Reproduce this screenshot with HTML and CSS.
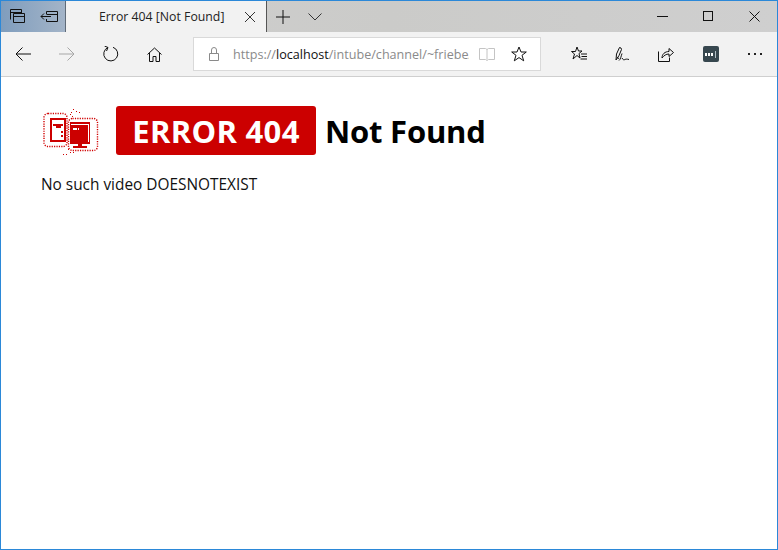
FILE: index.html
```html
<!DOCTYPE html>
<html lang="en">
<head>
    <meta charset="UTF-8">
    <title>Error 404 [Not Found]</title>
    <link rel="stylesheet" href="styles.css">
</head>
<body>
    <div class="window">
        <div class="tabbar">
            <div class="tab-tools">
                <svg width="20" height="21" viewBox="0 0 20 21"><path d="M2.500 13.500V3.500H13.500V7M2.500 6.500H13.500M5.500 7.500h11v9h-11zM5.500 10.500h11" fill="none" stroke="#111"/></svg>
                <svg width="20" height="21" viewBox="0 0 20 21"><path d="M6.500 8V5.500H17.500V15.500H6.500V13M6.500 8.500H17.500M1 10.500h10M4 7.500l-3 3 3 3" fill="none" stroke="#111"/></svg>
            </div>
            <div class="tab">
                <span class="tab-title">Error 404 [Not Found]</span>
                <svg width="12" height="12" viewBox="0 0 12 12"><path d="M1 1l10 10M11 1L1 11" fill="none" stroke="#333"/></svg>
            </div>
            <div class="tab-new">
                <svg width="14" height="14" viewBox="0 0 14 14"><path d="M7 0v14M0 7h14" fill="none" stroke="#111"/></svg>
                <svg width="14" height="8" viewBox="0 0 14 8"><path d="M.5.5L7 7 13.500.5" fill="none" stroke="#333"/></svg>
            </div>
            <div class="win-btns">
                <svg width="11" height="11" viewBox="0 0 11 11"><path d="M0 5.500h11" stroke="#111"/></svg>
                <svg width="11" height="11" viewBox="0 0 11 11"><rect x=".5" y=".5" width="9" height="9" fill="none" stroke="#111"/></svg>
                <svg width="11" height="11" viewBox="0 0 11 11"><path d="M.5.5l10 10M10.500 .5l-10 10" fill="none" stroke="#111"/></svg>
            </div>
        </div>
        <div class="toolbar">
            <div class="nav">
                <svg width="16" height="14" viewBox="0 0 16 14"><path d="M16 7H1M7.500.5L1 7l6.500 6.500" fill="none" stroke="#111"/></svg>
                <svg width="16" height="14" viewBox="0 0 16 14"><path d="M0 7h15M8.500.5L15 7l-6.500 6.500" fill="none" stroke="#a6a6a6"/></svg>
                <svg width="16" height="16" viewBox="0 0 16 16"><path d="M5 1.500A7 7 0 1 0 10 1.300M1.500 0L5 1.500 3.500 5" fill="none" stroke="#111"/></svg>
                <svg width="15" height="15" viewBox="0 0 15 15"><path d="M.5 7.500L7.500 1l7 6.500M2.500 6v8.500h3.500v-5h3v5h3.500V6" fill="none" stroke="#111"/></svg>
            </div>
            <div class="addressbar">
                <svg width="12" height="14" viewBox="0 0 12 14"><path d="M1.500 6.500h9v7h-9zM3.500 6.500V3a2.500 2.500 0 0 1 5 0v3.500" fill="none" stroke="#8a8a8a"/></svg>
                <span class="url">https://<b>localhost</b>/intube/channel/~friebe/</span>
                <svg class="reader" width="16" height="15" viewBox="0 0 16 15"><path d="M.5 1.500h6l1.500 1 1.500-1h6v11h-6l-1.500 1-1.500-1h-6zM8 2.500v10" fill="none" stroke="#c4c4c4"/></svg>
                <svg width="16" height="16" viewBox="0 0 16 16"><path d="M8 1l2 5h5.300l-4.300 3.300 1.700 5.500L8 11.600l-4.700 3.200L5 9.300.7 6H6z" fill="none" stroke="#111"/></svg>
            </div>
            <div class="actions">
                <svg width="16" height="16" viewBox="0 0 16 16"><path d="M6 1l1.500 4h3.500L8 7.500l1 4.500-3-2.500L2 13l1.500-5L.5 5.500H4.500zM10 8h6M10.500 10.500h5.500M9.500 13h6.500" fill="none" stroke="#111"/></svg>
                <svg width="15" height="16" viewBox="0 0 15 16"><path d="M1 14l.500-6 3-6.500 1.500.500.500 1.500-2.500 6zM2 11.500l2 1M7 7.500c-1 3-1.500 6-3 7M7 12c1 2 2 2 3 1.500s2-.500 4 0" fill="none" stroke="#111"/></svg>
                <svg width="16" height="16" viewBox="0 0 16 16"><path d="M.5 5.500v10h11v-4M4 12c0-4 3-6.500 7-6.500V2.500l4.500 4-4.500 4V8c-3 0-5 1.500-7 4z" fill="none" stroke="#111"/></svg>
                <span class="ext"><i></i><i></i><i></i><em></em></span>
                <span class="more"><i></i><i></i><i></i></span>
            </div>
        </div>
        <div class="content">
            <h1 class="title">
                <svg class="logo" width="58" height="46" viewBox="0 0 58 46">
                    <rect x="2" y="4.500" width="23" height="33" rx="4" fill="none" stroke="#d00000" stroke-width="1.400" stroke-dasharray="1.200 1.200"/>
                    <rect x="26.500" y="9.500" width="29" height="32" rx="4" fill="none" stroke="#d00000" stroke-width="1.400" stroke-dasharray="1.200 1.200"/>
                    <path d="M31 0h1v1h-1zM29 3h1v1h-1zM34 2h1v1h-1zM37 3h1v1h-1zM28 5h1v1h-1zM30 7h1v1h-1zM26 40h1v1h-1zM28 43h1v1h-1zM24 45h1v1h-1zM21 45h1v1h-1zM31 43h1v1h-1z" fill="#d00000"/>
                    <path d="M8 9h16v24H8zM10 11v20h12V11z" fill="#c00" fill-rule="evenodd"/>
                    <path d="M11 15h10v2H11zM14 17h5v2h-5zM19 22h2v2h-2zM19 26h2v2h-2z" fill="#c00"/>
                    <path d="M28 13h20v22H28z" fill="#c00"/>
                    <path d="M29 15h17v1H29zM46 15h1v18h-1z" fill="#fff"/>
                    <path d="M31 19h4v2h-4zM36 19h1v2h-1z" fill="#fff"/>
                    <path d="M36 35h4v2h-4zM31 37h14v2H31z" fill="#c00"/>
                </svg>
                <span class="badge">ERROR 404</span>
                <span class="status">Not Found</span>
            </h1>
            <p class="message">No such video DOESNOTEXIST</p>
        </div>
    </div>
</body>
</html>
```

FILE: styles.css
```css
* {
    margin: 0;
    padding: 0;
    box-sizing: border-box;
}
html, body {
    width: 100%;
    height: 100%;
    overflow: hidden;
    background: #fff;
    font-family: "Open Sans", "Noto Sans", sans-serif;
}
svg {
    display: block;
    flex: none;
}

.window {
    display: flex;
    flex-direction: column;
    height: 100%;
    border: 1px solid #2b88d8;
}

.tabbar {
    display: flex;
    height: 31px;
    background: linear-gradient(to right, #cfcfcf, #cbcbc9 50%, #cfcfcf);
}
.tab-tools {
    display: flex;
    align-items: center;
    gap: 12px;
    width: 65px;
    padding-left: 7px;
    background: linear-gradient(to right, #7f9dbd, #a3b4c8);
    border-right: 1px solid #5f6b78;
}
.tab {
    display: flex;
    align-items: center;
    width: 201px;
    padding-left: 33px;
    background: #f2f2f2;
    border-right: 1px solid #555;
}
.tab-title {
    width: 145px;
    font-size: 12.3px;
    color: #222;
    white-space: nowrap;
}
.tab-new {
    display: flex;
    align-items: center;
    gap: 18px;
    padding-left: 9px;
}
.win-btns {
    display: flex;
    align-items: center;
    gap: 35px;
    margin-left: auto;
    padding-right: 17px;
}

.toolbar {
    display: flex;
    align-items: center;
    height: 45px;
    background: #f2f2f2;
    border-bottom: 1px solid #cfcfcf;
}
.nav {
    display: flex;
    align-items: center;
    gap: 28px;
    width: 192px;
    padding-left: 14px;
}
.addressbar {
    display: flex;
    align-items: center;
    width: 348px;
    height: 34px;
    padding-left: 14px;
    background: #fff;
    border: 1px solid #d9d9d9;
}
.url {
    width: 236px;
    margin-left: 13px;
    overflow: hidden;
    font-size: 12.6px;
    color: #8a8a8a;
    white-space: nowrap;
}
.url b {
    font-weight: 400;
    color: #111;
}
.reader {
    margin: 0 16px 0 10px;
}
.actions {
    display: flex;
    align-items: center;
    gap: 28px;
    margin-left: 30px;
}
.ext {
    display: flex;
    align-items: center;
    gap: 1px;
    width: 16px;
    height: 16px;
    margin-left: 1px;
    padding-left: 2px;
    background: #37474f;
    border-radius: 2px;
}
.ext i {
    width: 2px;
    height: 3px;
    background: #fff;
}
.ext em {
    width: 1px;
    height: 7px;
    margin-left: 1px;
    background: #b0bec5;
}
.more {
    display: flex;
    gap: 4px;
    margin-left: 1px;
}
.more i {
    width: 2px;
    height: 2px;
    background: #222;
}

.content {
    flex: 1;
    padding: 29px 40px;
    background: #fff;
}
.title {
    display: flex;
    align-items: center;
    height: 49px;
    font-size: 31px;
    font-weight: 700;
    line-height: 49px;
    color: #000;
}
.logo {
    margin: 3px 16px 0 1px;
}
.badge {
    width: 200px;
    height: 49px;
    margin-right: 9px;
    padding-top: 1px;
    text-align: center;
    letter-spacing: .3px;
    color: #fff;
    background: #c00;
    border-radius: 3px;
}
.status {
    padding-top: 2px;
    letter-spacing: -.2px;
}
.message {
    margin-top: 20px;
    font-size: 15.4px;
    line-height: 20px;
    color: #111;
}
```
